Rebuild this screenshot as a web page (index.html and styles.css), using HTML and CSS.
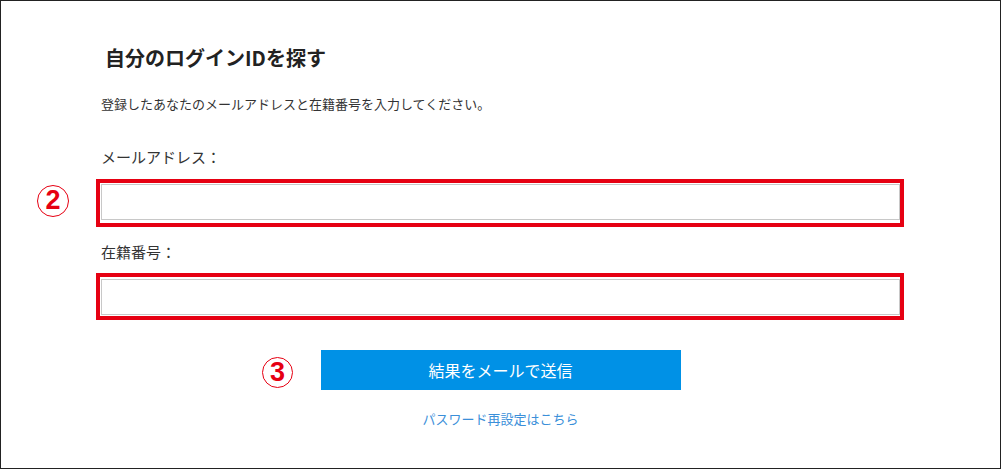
FILE: index.html
```html
<!DOCTYPE html>
<html lang="ja"><head>
  <meta name="viewport" content="width=device-width, initial-scale=1.0">
  <title>自分のログインIDを探す</title>
  <link rel="stylesheet" href="styles.css">
</head>
<body>
  <div class="frame">
    <div class="panel">
      <h1 class="title">自分のログインIDを探す</h1>
      <p class="lead">登録したあなたのメールアドレスと在籍番号を入力してください。</p>

      <!-- メールアドレス -->
      <label class="label" for="mail">メールアドレス：</label>
      <div class="mark">
        <span class="badge">2</span>
        <input type="text" id="mail" class="field">
      </div>

      <!-- 在籍番号 -->
      <label class="label label-second" for="num">在籍番号：</label>
      <div class="mark mark-second">
        <input type="text" id="num" class="field">
      </div>

      <div class="actions">
        <span class="badge badge-btn">3</span>
        <button class="submit">結果をメールで送信</button>
      </div>

      <a class="reset" href="#">パスワード再設定はこちら</a>
    </div>
  </div>
</body>
</html>
```

FILE: styles.css
```css
* {
  box-sizing: border-box;
}
body {
  margin: 0;
  font-family: "Noto Sans CJK JP", "Noto Sans", sans-serif;
  color: #333;
  background: #fff;
}
.frame {
  position: relative;
  width: 1001px;
  height: 469px;
  border: 1px solid #222;
  padding: 43px 100px 0 100px;
}
.panel {
  display: flex;
  flex-direction: column;
}
.title {
  margin: 0;
  padding-left: 4px;
  font-size: 20px;
  line-height: 28px;
  font-weight: bold;
  color: #222;
}
.lead {
  margin: 22px 0 0;
  font-size: 13px;
  line-height: 20px;
}
.label {
  margin-top: 32px;
  font-size: 15px;
  line-height: 22px;
}
.label-second {
  margin-top: 14px;
}
.mark {
  position: relative;
  margin: 11px -4px 0 -5px;
  border: 4px solid #e60012;
  padding: 1px 0 3px 1px;
}
.mark-second {
  margin-top: 10px;
  padding-top: 2px;
  padding-bottom: 1px;
}
.field {
  display: block;
  width: 100%;
  height: 36px;
  border: 1px solid #c8c8c8;
  background: #fff;
  margin: 0;
  padding: 0 8px;
  font: inherit;
}
.badge {
  position: absolute;
  left: -63px;
  top: 2px;
  width: 32px;
  height: 32px;
  border: 1.5px solid #e60012;
  border-radius: 50%;
  color: #e60012;
  font-family: "Liberation Sans", Arial, sans-serif;
  font-weight: bold;
  font-size: 27px;
  line-height: 29px;
  text-align: center;
}
.actions {
  position: relative;
  display: flex;
  justify-content: center;
  margin-top: 30px;
}
.badge-btn {
  left: 161px;
  top: 7px;
  width: 31px;
  height: 31px;
  line-height: 28px;
}
.submit {
  width: 360px;
  height: 40px;
  border: none;
  background: #0091e6;
  color: #fff;
  font-family: inherit;
  font-size: 16px;
  cursor: pointer;
}
.reset {
  align-self: center;
  margin-top: 19px;
  font-size: 13px;
  line-height: 20px;
  color: #3b8fd9;
  text-decoration: none;
}
```
